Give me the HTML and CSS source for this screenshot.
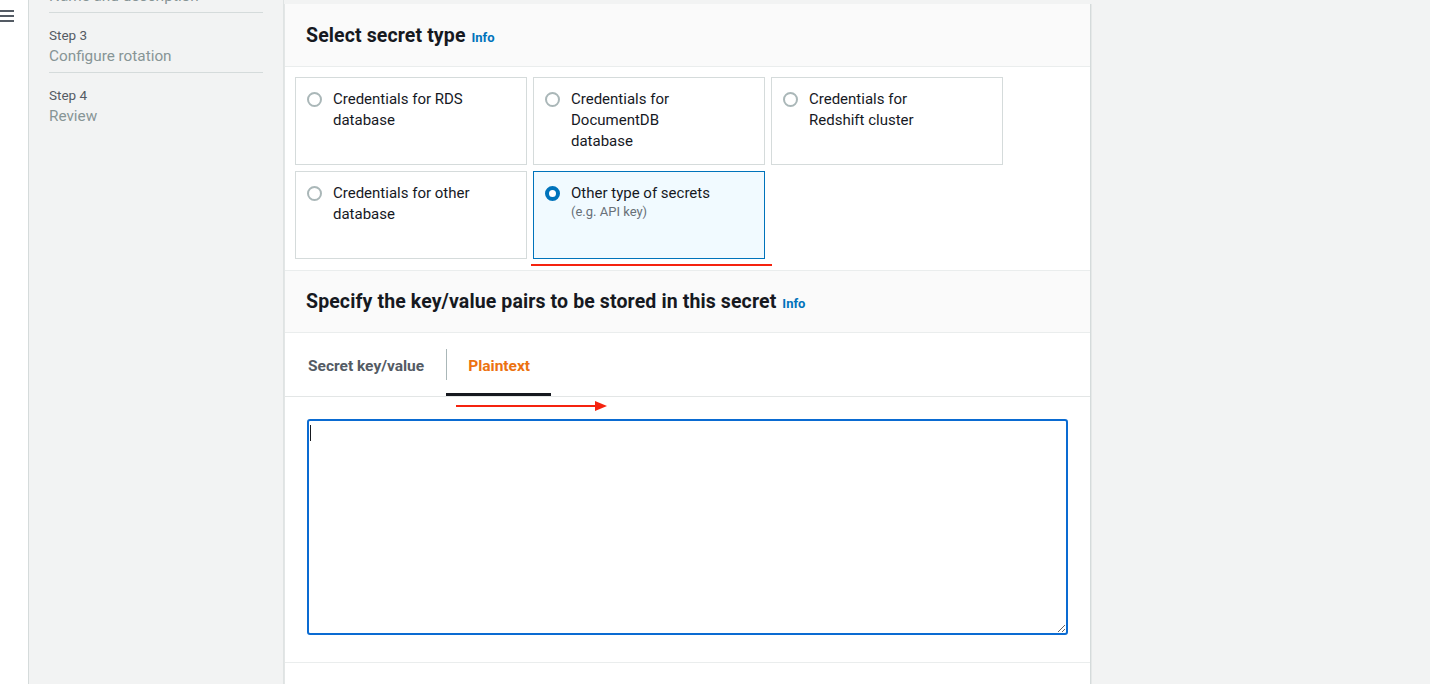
FILE: index.html
```html
<!DOCTYPE html>
<html lang="en">
<head>
<meta charset="utf-8">
<title>Store a new secret</title>
<link rel="stylesheet" href="styles.css">
</head>
<body>
<div class="app">
  <div class="rail">
    <button class="menu-btn" aria-label="Open navigation">
      <span class="bar"></span><span class="bar"></span><span class="bar"></span>
    </button>
  </div>
  <nav class="steps">
    <ul class="step-list">
      <li class="step"><div class="step-label">Step 2</div><div class="step-title">Name and description</div></li>
      <li class="step"><div class="step-label">Step 3</div><div class="step-title">Configure rotation</div></li>
      <li class="step no-border"><div class="step-label">Step 4</div><div class="step-title">Review</div></li>
    </ul>
  </nav>
  <main class="content">
    <section class="panel">
      <header class="panel-header">
        <h2 class="panel-title">Select secret type <a class="info" href="#">Info</a></h2>
      </header>
      <div class="tiles-wrap">
        <div class="tiles">
          <label class="tile"><span class="radio"></span><span class="tile-text">Credentials for RDS database</span></label>
          <label class="tile"><span class="radio"></span><span class="tile-text">Credentials for DocumentDB database</span></label>
          <label class="tile"><span class="radio"></span><span class="tile-text">Credentials for Redshift cluster</span></label>
          <label class="tile"><span class="radio"></span><span class="tile-text">Credentials for other database</span></label>
          <label class="tile selected"><span class="radio checked"></span><span class="tile-text">Other type of secrets<span class="tile-sub">(e.g. API key)</span></span><span class="mark-line"></span></label>
        </div>
      </div>
      <header class="panel-header section-top">
        <h2 class="panel-title">Specify the key/value pairs to be stored in this secret <a class="info" href="#">Info</a></h2>
      </header>
      <div class="tabs">
        <button class="tab">Secret key/value</button>
        <button class="tab active">Plaintext</button>
      </div>
      <div class="editor">
        <svg class="arrow" width="152" height="12" viewBox="0 0 152 12"><line x1="0" y1="6" x2="142" y2="6" stroke="#f5230f" stroke-width="2"/><polygon points="139,1 151,6 139,11" fill="#f5230f"/></svg>
        <div class="field">
          <textarea class="plain" aria-label="Plaintext secret"></textarea>
          <span class="caret"></span>
        </div>
      </div>
      <div class="panel-foot"></div>
    </section>
  </main>
</div>
</body>
</html>
```
FILE: styles.css
```css
* { box-sizing: border-box; }
html, body { margin: 0; padding: 0; height: 100%; overflow: hidden; }
body {
  font-family: Roboto, "Liberation Sans", Arial, sans-serif;
  color: #16191f;
  background: #f2f3f3;
}
.app { display: flex; height: 684px; }

.rail {
  width: 29px;
  flex: none;
  background: #ffffff;
  border-right: 1px solid #d5dbdb;
  padding-top: 10px;
}
.menu-btn {
  display: flex;
  flex-direction: column;
  gap: 3px;
  width: 14px;
  padding: 0;
  border: 0;
  background: none;
}
.menu-btn .bar { display: block; width: 14px; height: 2px; background: #545b64; }

.steps {
  width: 255px;
  flex: none;
  background: #f2f3f3;
  border-right: 1px solid #dfe3e3;
  padding: 0 20px;
}
.step-list { list-style: none; margin: -47px 0 0; padding: 0; }
.step {
  padding: 13px 0 5px;
  border-bottom: 1px solid #d5dbdb;
}
.step.no-border { border-bottom: 0; }
.step-label { font-size: 13.5px; line-height: 18px; color: #545b64; }
.step-title { font-size: 15.3px; line-height: 22px; margin-top: 1px; color: #879596; }

.content { flex: 1; padding-top: 4px; background: #f2f3f3; }
.panel {
  width: 807px;
  height: 100%;
  background: #ffffff;
  border-left: 1px solid #e3e6e6;
  border-right: 1px solid #d5dbdb;
  box-shadow: 1px 0 0 #e6e8e8;
  display: flex;
  flex-direction: column;
}
.panel-header {
  height: 63px;
  flex: none;
  display: flex;
  align-items: center;
  padding: 3px 21px 0;
  background: #fafafa;
  border-bottom: 1px solid #eaeded;
}
.panel-header.section-top { border-top: 1px solid #eaeded; height: 63px; }
.panel-title { margin: 0; font-size: 19.5px; font-weight: 700; line-height: 24px; letter-spacing: 0.12px; color: #16191f; }
.info { font-size: 13px; font-weight: 700; color: #0073bb; text-decoration: none; margin-left: 1px; letter-spacing: 0; }

.tiles-wrap { padding: 10px 10px 11px; }
.tiles {
  display: grid;
  grid-template-columns: repeat(3, 232px);
  grid-auto-rows: 88px;
  gap: 6px;
}
.tile {
  position: relative;
  display: flex;
  align-items: flex-start;
  gap: 11px;
  padding: 11px 10px 10px 11px;
  border: 1px solid #d5dbdb;
  background: #ffffff;
}
.tile.selected { border-color: #0073bb; background: #f1faff; }
.radio {
  flex: none;
  width: 15px;
  height: 15px;
  margin-top: 3px;
  border: 2px solid #aab7b8;
  border-radius: 50%;
  background: #ffffff;
}
.radio.checked { border: 4px solid #0073bb; background: #ffffff; }
.tile-text { width: 150px; font-size: 15px; line-height: 21px; color: #16191f; }
.tile-sub { display: block; font-size: 13px; line-height: 16px; color: #687078; }
.mark-line {
  position: absolute;
  left: -3px;
  bottom: -8px;
  width: 241px;
  height: 2px;
  background: #f5230f;
}

.tabs {
  height: 64px;
  flex: none;
  display: flex;
  border-bottom: 1px solid #e3e6e6;
}
.tab {
  position: relative;
  padding: 2px 22px 0 22px;
  border: 0;
  background: none;
  font-family: inherit;
  font-size: 15.5px;
  font-weight: 700;
  color: #545b64;
}
.tab + .tab::before {
  content: "";
  position: absolute;
  left: 0;
  top: 16px;
  height: 31px;
  width: 1px;
  background: #aab7b8;
}
.tabs .tab:first-child { padding-left: 23px; padding-right: 22px; }
.tab.active { color: #ec7211; border-bottom: 3px solid #16191f; padding: 5px 21px 0 22px; }

.editor { position: relative; padding: 22px 22px 27px; border-bottom: 1px solid #eaeded; }
.arrow { position: absolute; left: 171px; top: 3px; }
.field { position: relative; }
.plain {
  display: block;
  width: 100%;
  height: 216px;
  border: 2px solid #0a6bd2;
  border-radius: 3px;
  outline: none;
  background: #ffffff;
  font-family: inherit;
  font-size: 14px;
}
.caret {
  position: absolute;
  left: 3px;
  top: 6px;
  width: 1px;
  height: 16px;
  background: #16191f;
}
.panel-foot { flex: 1; background: #ffffff; }
```
